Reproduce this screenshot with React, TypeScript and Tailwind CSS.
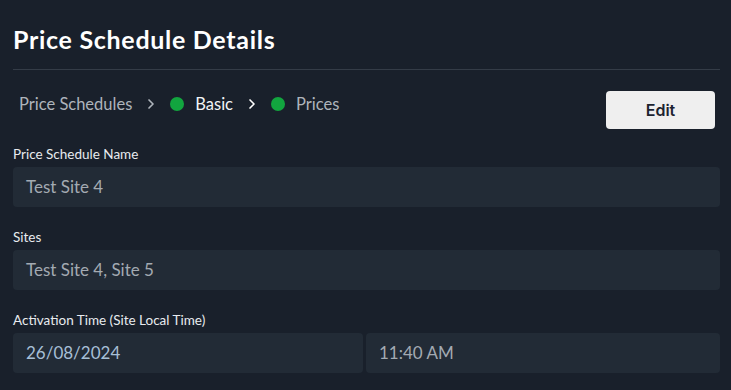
import { ChevronRight } from "lucide-react";

const font = { fontFamily: "Lato, 'Noto Sans', sans-serif" };

function Field({ label, children }: { label: string; children: React.ReactNode }) {
  return (
    <div className="flex flex-col">
      <label className="mb-[5px] h-[15px] text-[13.5px] leading-[15px] text-[#e8ebef]">{label}</label>
      {children}
    </div>
  );
}

function Box({ value, className = "" }: { value: string; className?: string }) {
  return (
    <div className={`flex h-10 items-center rounded-[4px] bg-[#222b36] px-[13px] text-[17px] ${className}`}>
      {value}
    </div>
  );
}

export default function App() {
  return (
    <div className="h-[390px] w-[731px] bg-[#19202b] pl-[13px] pr-[11px]" style={font}>
      <h1 className="pt-[24px] pb-[15px] text-[25px] font-bold leading-[30px] tracking-[0.7px] text-white">
        Price Schedule Details
      </h1>
      <div className="h-px bg-[#343c47]" />
      <div className="mt-[21px] flex items-start justify-between">
        <nav className="flex items-center gap-[11px] pl-[6px] pt-[3px] text-[16.5px] leading-[20px]">
          <span className="text-[#aeb4bc]">Price Schedules</span>
          <ChevronRight className="h-4 w-4 text-[#aeb4bc]" strokeWidth={2.5} />
          <span className="flex items-center gap-[11px] text-[#f2f4f6]">
            <span className="h-[14px] w-[14px] rounded-full bg-[#12a53f]" />
            Basic
          </span>
          <ChevronRight className="h-4 w-4 text-white" strokeWidth={2.5} />
          <span className="flex items-center gap-[11px] text-[#aeb4bc]">
            <span className="h-[14px] w-[14px] rounded-full bg-[#12a53f]" />
            Prices
          </span>
        </nav>
        <button
          className="mr-[5px] h-[38px] w-[109px] rounded-[4px] bg-[#efefef] text-[16px] font-semibold text-[#1c2330]"
          style={{ fontFamily: "Inter, sans-serif" }}
        >
          Edit
        </button>
      </div>
      <div className="mt-[18px] flex flex-col gap-[23px]">
        <Field label="Price Schedule Name">
          <Box value="Test Site 4" className="text-[#a3aab2]" />
        </Field>
        <Field label="Sites">
          <Box value="Test Site 4, Site 5" className="text-[#a3aab2]" />
        </Field>
        <Field label="Activation Time (Site Local Time)">
          <div className="flex gap-[3px]">
            <Box value="26/08/2024" className="w-[350px] text-[#a7bfd6]" />
            <Box value="11:40 AM" className="flex-1 text-[#a3aab2]" />
          </div>
        </Field>
      </div>
    </div>
  );
}
